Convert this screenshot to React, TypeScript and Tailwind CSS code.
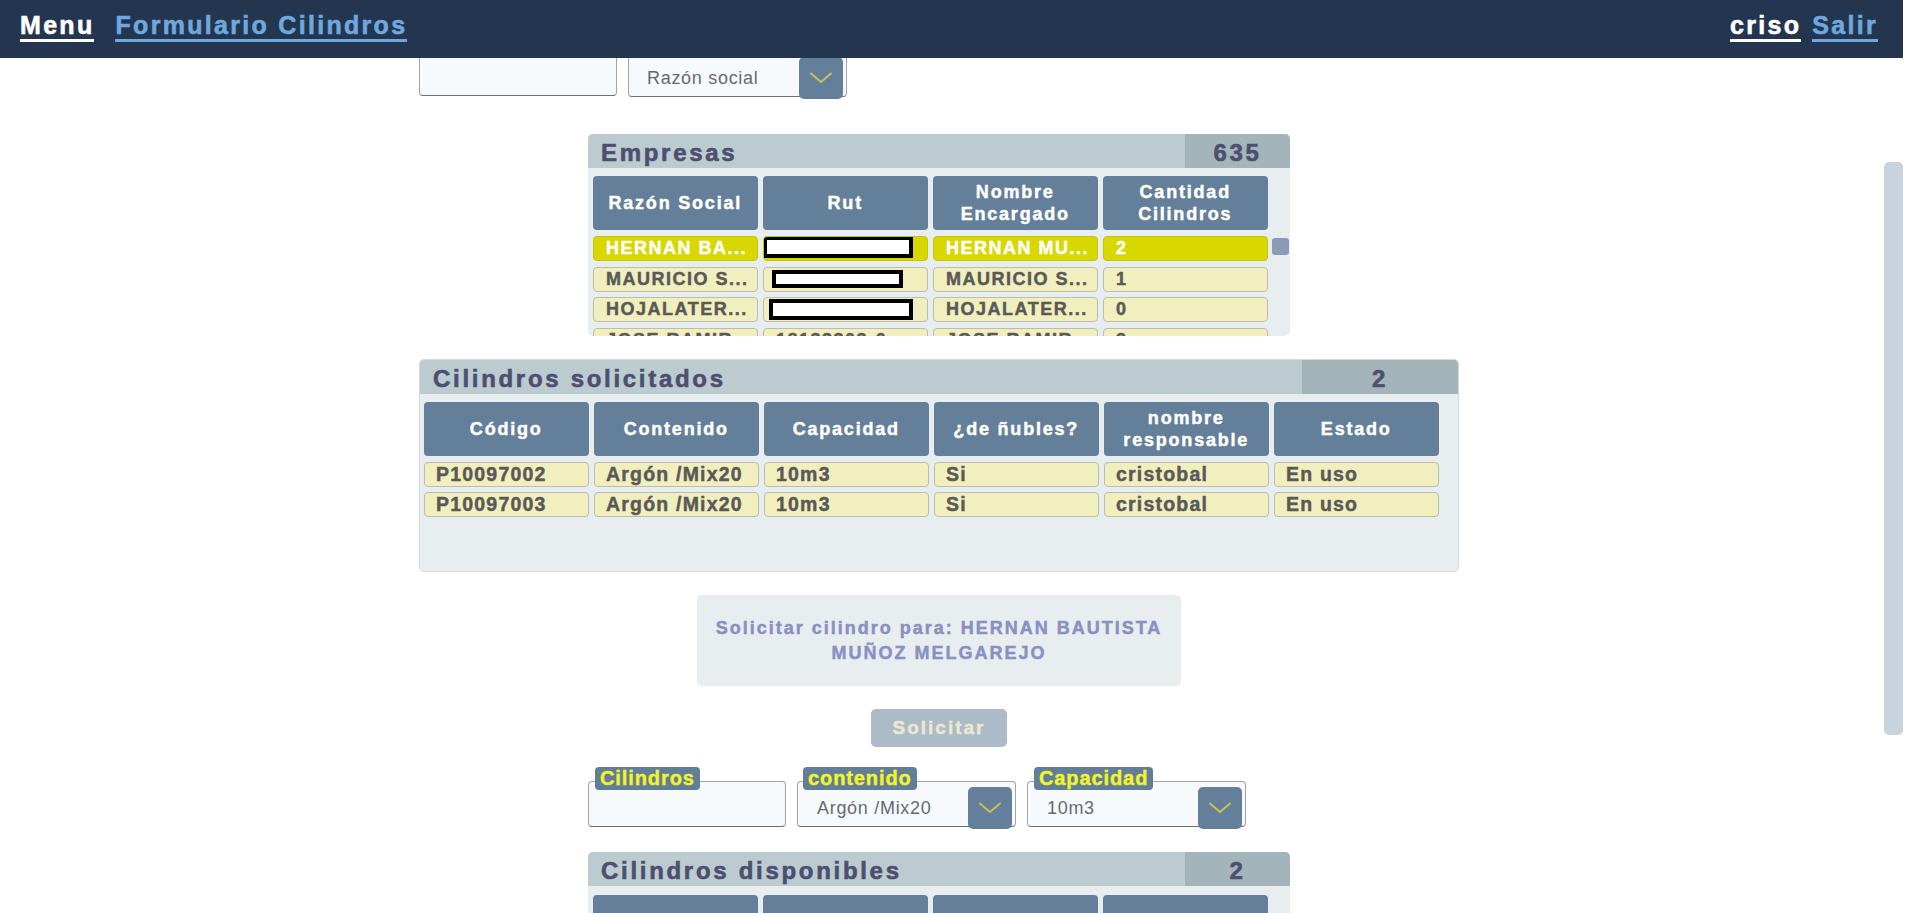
import React from "react";

const Chevron = () => (
  <svg width="24" height="12" viewBox="0 0 24 12" fill="none">
    <path d="M2 1.5 L12 10 L22 1.5" stroke="#cbbd5c" strokeWidth="2" strokeLinecap="round" strokeLinejoin="round" />
  </svg>
);

const headCell =
  "h-[54px] rounded-[4px] bg-[#647f99] text-white text-[18px] font-bold tracking-[1.8px] leading-[22.5px] flex items-center justify-center text-center px-1 [-webkit-text-stroke:0.45px_white]";

const rowCell =
  "h-[25px] rounded-[4px] border border-[#bdbdae] bg-[#f1efbe] text-[18px] font-bold tracking-[1.5px] leading-[23px] text-[#595959] pl-[12px] pr-[4px] whitespace-nowrap overflow-hidden [-webkit-text-stroke:0.45px_#595959]";

const selCell =
  "h-[25px] rounded-[4px] border border-[#c8c600] bg-[#d9d700] text-[18px] font-bold tracking-[1.5px] leading-[23px] text-white pl-[12px] pr-[4px] whitespace-nowrap overflow-hidden [-webkit-text-stroke:0.45px_white]";

const solCell =
  "h-[25px] rounded-[4px] border border-[#bdbdae] bg-[#f1efbe] text-[19.5px] font-bold tracking-[1.2px] leading-[23px] text-[#595959] pl-[11px] pr-[2px] whitespace-nowrap overflow-hidden [-webkit-text-stroke:0.45px_#595959]";

function TitleBar({ title, count, countW }: { title: string; count: string; countW: string }) {
  return (
    <div className="flex h-[34px] bg-[#bccbcf]">
      <div className="flex-1 pl-[13px] pt-[4px] text-[24px] font-bold tracking-[2.7px] leading-[30px] text-[#4c4f70] [-webkit-text-stroke:0.6px_#4c4f70]">
        {title}
      </div>
      <div
        className={`${countW} bg-[#a3b5ba] pt-[4px] text-center text-[24px] font-bold tracking-[2.7px] leading-[30px] text-[#4c4f70] [-webkit-text-stroke:0.6px_#4c4f70]`}
      >
        {count}
      </div>
    </div>
  );
}

function Redact({ w, h, ml, mt }: { w: string; h: string; ml: string; mt: string }) {
  return <div className={`${w} ${h} ${ml} ${mt} border-[4px] border-black bg-white`} />;
}

export default function App() {
  const empresas: { sel: boolean; cells: React.ReactNode[] }[] = [
    {
      sel: true,
      cells: ["HERNAN BA...", <Redact key="r" w="w-[150px]" h="h-[22px]" ml="-ml-[13px]" mt="-mt-[1px]" />, "HERNAN MU...", "2"],
    },
    {
      sel: false,
      cells: ["MAURICIO S...", <Redact key="r" w="w-[131px]" h="h-[18px]" ml="-ml-[4px]" mt="mt-[2px]" />, "MAURICIO S...", "1"],
    },
    {
      sel: false,
      cells: ["HOJALATER...", <Redact key="r" w="w-[144px]" h="h-[21px]" ml="-ml-[7px]" mt="mt-[1px]" />, "HOJALATER...", "0"],
    },
    { sel: false, cells: ["JOSE RAMIR...", "18133303-6", "JOSE RAMIR...", "3"] },
  ];

  const solicitados = [
    ["P10097002", "Argón /Mix20", "10m3", "Si", "cristobal", "En uso"],
    ["P10097003", "Argón /Mix20", "10m3", "Si", "cristobal", "En uso"],
  ];

  const navText = "inline-block h-[31px] text-[25px] font-bold tracking-[2.3px] leading-[28px] border-b-[3px]";

  const labelCls =
    "absolute top-0 h-[23px] px-[5px] rounded-[4px] bg-[#627d97] text-[20px] font-bold tracking-[0.9px] leading-[23px] text-[#f4f428] [-webkit-text-stroke:0.4px_#f4f428]";

  return (
    <div className="w-[1908px] h-[913px] overflow-hidden bg-white flex flex-col font-['Liberation_Sans',Arial,sans-serif]">
      {/* Header */}
      <header className="w-[1903px] h-[58px] shrink-0 bg-[#24354f] flex justify-between pl-[20px] pr-[25px]">
        <nav className="flex gap-[21px] pt-[11px]">
          <a className={`${navText} text-white border-white [-webkit-text-stroke:0.6px_white]`}>Menu</a>
          <a className={`${navText} text-[#6ea8de] border-[#6ea8de] [-webkit-text-stroke:0.6px_#6ea8de]`}>Formulario Cilindros</a>
        </nav>
        <nav className="flex gap-[11px] pt-[11px]">
          <a className={`${navText} text-white border-white [-webkit-text-stroke:0.6px_white]`}>criso</a>
          <a className={`${navText} text-[#6ea8de] border-[#6ea8de] [-webkit-text-stroke:0.6px_#6ea8de]`}>Salir</a>
        </nav>
      </header>

      <div className="flex flex-1 min-h-0">
        <main className="w-[1878px] flex flex-col items-center [&>*]:shrink-0">
          {/* Top filter row (partly scrolled under the header) */}
          <div className="w-[1040px] h-[42px] overflow-hidden">
            <div className="flex gap-[11px] -mt-[8px]">
              <div className="w-[198px] h-[46px] rounded-[4px] border border-[#a3a3a3] border-b-[#6f6f6f] bg-[#f7fafd]" />
              <div className="w-[219px] h-[47px] rounded-[4px] border border-[#a3a3a3] border-b-[#6f6f6f] bg-[#f7fafd] flex">
                <div className="flex-1 self-end pl-[18px] pb-[7px] text-[18px] tracking-[0.7px] leading-[22px] text-[#666a70]">
                  Razón social
                </div>
                <div className="w-[44px] h-[42px] mt-[6px] mr-[3px] rounded-[5px] bg-[#647f99] flex items-center justify-center">
                  <Chevron />
                </div>
              </div>
            </div>
          </div>

          {/* Empresas */}
          <section className="w-[702px] h-[202px] mt-[34px] rounded-[5px] bg-[#e8edf0] overflow-hidden">
            <TitleBar title="Empresas" count="635" countW="w-[105px]" />
            <div className="pl-[5px] pt-[8px]">
              <div className="grid grid-cols-[repeat(4,164.5px)] gap-x-[5.5px]">
                <div className={headCell}>Razón Social</div>
                <div className={headCell}>Rut</div>
                <div className={headCell}>Nombre Encargado</div>
                <div className={headCell}>Cantidad Cilindros</div>
              </div>
              <div className="flex mt-[6px]">
                <div className="grid grid-cols-[repeat(4,164.5px)] gap-x-[5.5px] gap-y-[5.5px]">
                  {empresas.map((r, i) =>
                    r.cells.map((c, j) => (
                      <div key={`${i}-${j}`} className={r.sel ? selCell : rowCell}>
                        {c}
                      </div>
                    ))
                  )}
                </div>
                <div className="ml-[4.5px] mt-[2px] w-[17px] h-[17px] rounded-[3px] bg-[#8d9ab7]" />
              </div>
            </div>
          </section>

          {/* Cilindros solicitados */}
          <section className="w-[1040px] h-[213px] mt-[23px] rounded-[5px] border border-[#d3dade] bg-[#e8edf0] overflow-hidden">
            <TitleBar title="Cilindros solicitados" count="2" countW="w-[156px]" />
            <div className="pl-[4px] pt-[8px]">
              <div className="grid grid-cols-[repeat(6,164.5px)] gap-x-[5.5px]">
                <div className={headCell}>Código</div>
                <div className={headCell}>Contenido</div>
                <div className={headCell}>Capacidad</div>
                <div className={headCell}>¿de ñubles?</div>
                <div className={headCell}>nombre responsable</div>
                <div className={headCell}>Estado</div>
              </div>
              <div className="grid grid-cols-[repeat(6,164.5px)] gap-x-[5.5px] gap-y-[5px] mt-[6px]">
                {solicitados.map((r, i) =>
                  r.map((c, j) => (
                    <div key={`${i}-${j}`} className={solCell}>
                      {c}
                    </div>
                  ))
                )}
              </div>
            </div>
          </section>

          {/* Solicitar para */}
          <div className="w-[484px] h-[91px] mt-[23px] rounded-[5px] bg-[#e8edf0] flex items-center justify-center px-[6px] text-center text-[18px] font-bold tracking-[2px] leading-[25px] text-[#8990c2] [-webkit-text-stroke:0.45px_#8990c2]">
            Solicitar cilindro para: HERNAN BAUTISTA MUÑOZ MELGAREJO
          </div>

          {/* Button */}
          <button className="w-[136px] h-[38px] mt-[23px] rounded-[5px] bg-[#adbac7] text-[19px] font-bold tracking-[2px] text-[#eceacd] [-webkit-text-stroke:0.45px_#eceacd]">
            Solicitar
          </button>

          {/* Bottom filters */}
          <div className="w-[702px] mt-[20px] flex gap-[11px]">
            <div className="relative pt-[14px]">
              <div className="w-[198px] h-[46px] rounded-[4px] border border-[#a3a3a3] border-b-[#6f6f6f] bg-[#f7fafd]" />
              <span className={`${labelCls} left-[7px]`}>Cilindros</span>
            </div>
            <div className="relative pt-[14px]">
              <div className="w-[219px] h-[46px] rounded-[4px] border border-[#a3a3a3] border-b-[#6f6f6f] bg-[#f7fafd] flex">
                <div className="flex-1 self-end pl-[19px] pb-[7px] text-[18px] tracking-[0.7px] leading-[22px] text-[#666a70]">
                  Argón /Mix20
                </div>
                <div className="w-[44px] h-[42px] mt-[5px] mr-[3px] rounded-[5px] bg-[#647f99] flex items-center justify-center">
                  <Chevron />
                </div>
              </div>
              <span className={`${labelCls} left-[6px]`}>contenido</span>
            </div>
            <div className="relative pt-[14px]">
              <div className="w-[219px] h-[46px] rounded-[4px] border border-[#a3a3a3] border-b-[#6f6f6f] bg-[#f7fafd] flex">
                <div className="flex-1 self-end pl-[19px] pb-[7px] text-[18px] tracking-[0.7px] leading-[22px] text-[#666a70]">
                  10m3
                </div>
                <div className="w-[44px] h-[42px] mt-[5px] mr-[3px] rounded-[5px] bg-[#647f99] flex items-center justify-center">
                  <Chevron />
                </div>
              </div>
              <span className={`${labelCls} left-[7px]`}>Capacidad</span>
            </div>
          </div>

          {/* Cilindros disponibles */}
          <section className="w-[702px] h-[220px] mt-[25px] rounded-[5px] bg-[#e8edf0] overflow-hidden">
            <TitleBar title="Cilindros disponibles" count="2" countW="w-[105px]" />
            <div className="pl-[5px] pt-[9px]">
              <div className="grid grid-cols-[repeat(4,164.5px)] gap-x-[5.5px]">
                <div className={headCell}>Código</div>
                <div className={headCell}>Contenido</div>
                <div className={headCell}>Capacidad</div>
                <div className={headCell}>¿de ñubles?</div>
              </div>
            </div>
          </section>
        </main>

        {/* Page scrollbar */}
        <div className="w-[30px] shrink-0 pl-[6px]">
          <div className="mt-[104px] w-[19px] h-[573px] rounded-[5px] bg-[#c8d3de]" />
        </div>
      </div>
    </div>
  );
}
